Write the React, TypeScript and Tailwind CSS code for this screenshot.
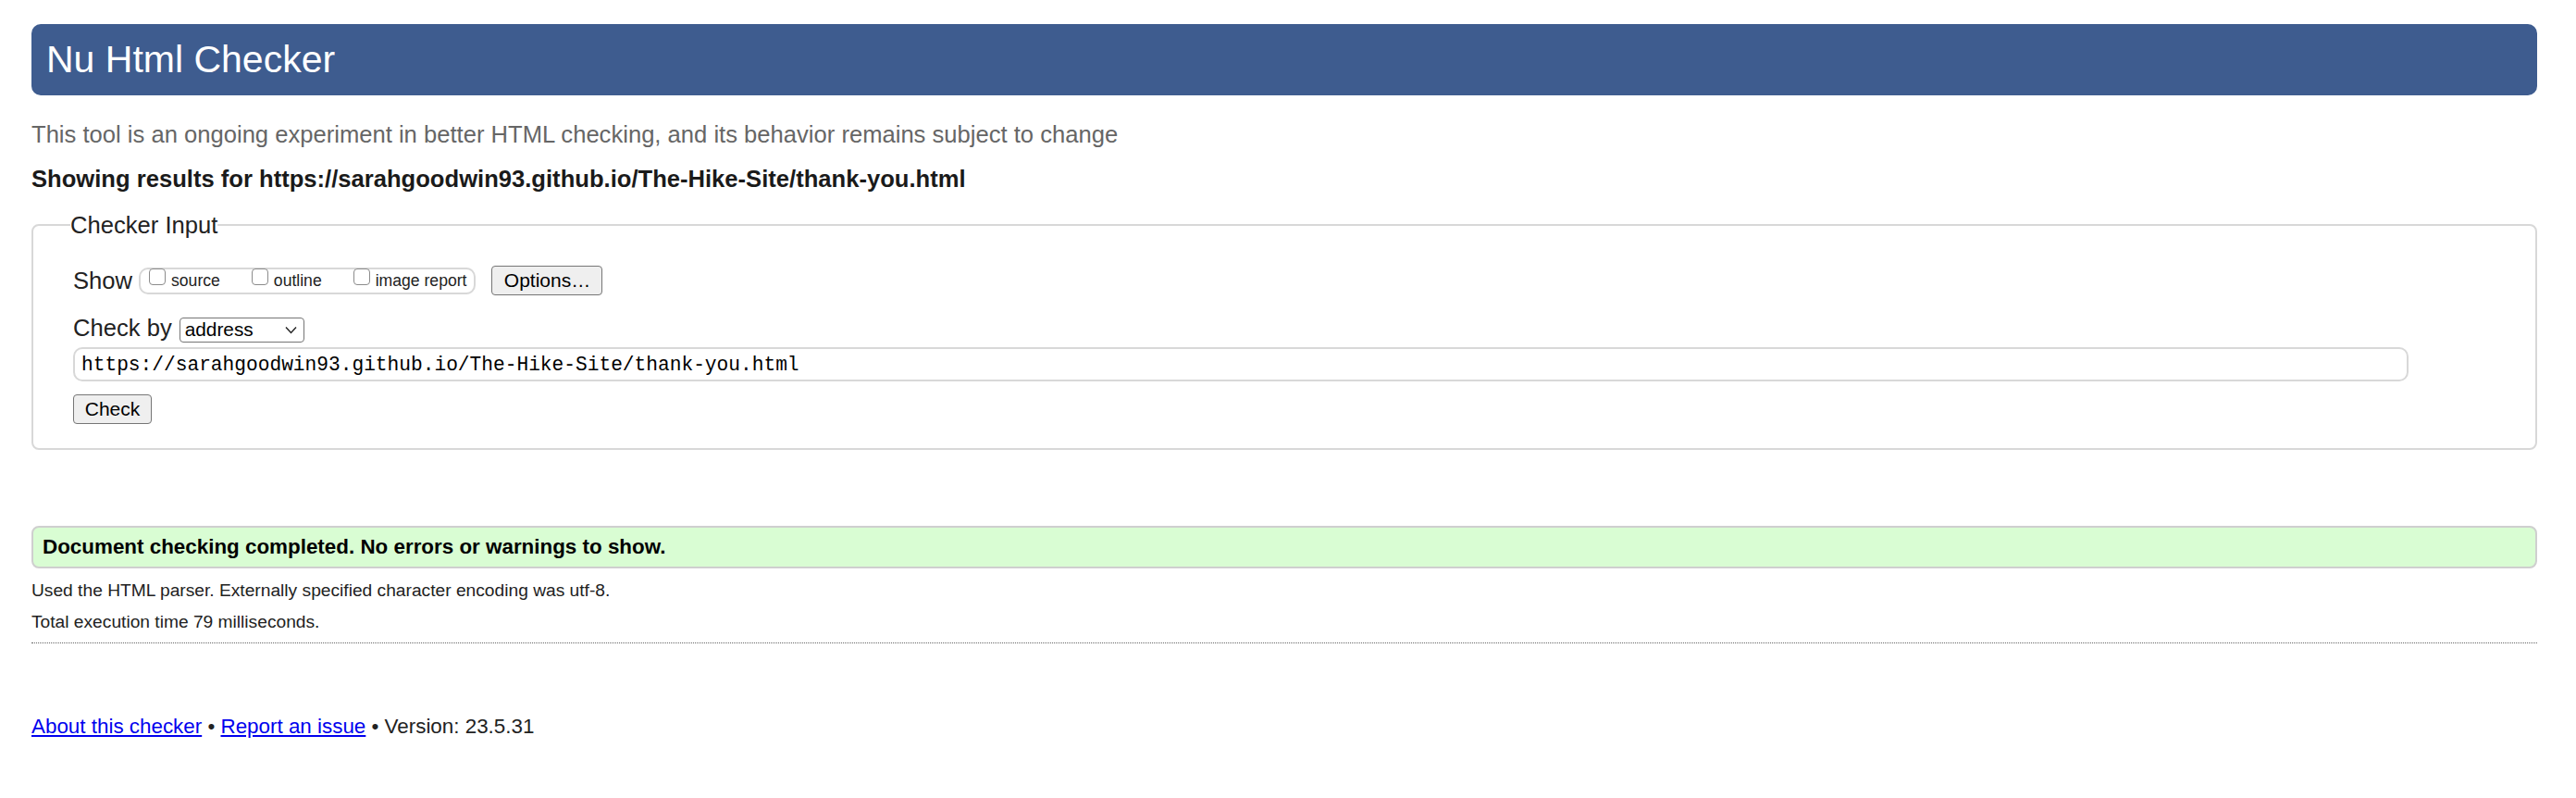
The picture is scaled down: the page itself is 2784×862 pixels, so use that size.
import React from "react";

const URL = "https://sarahgoodwin93.github.io/The-Hike-Site/thank-you.html";

const OPTIONS = ["source", "outline", "image report"];

const Checkbox: React.FC<{ label: string; first?: boolean }> = ({ label, first }) => (
  <label className={first ? "flex items-center" : "ml-[34px] flex items-center"}>
    <input
      type="checkbox"
      className="mb-[9px] h-[18px] w-[18px] appearance-none rounded-[4px] border border-[#8c8c8c] bg-white"
    />
    <span className="ml-[6px] text-[17.6px] leading-[22px]">{label}</span>
  </label>
);

export default function App() {
  return (
    <div className="min-h-[862px] bg-white font-['Liberation_Sans',Arial,sans-serif] text-[#222]">
      <div className="ml-[34px] mr-[42px] pt-[26px]">
        {/* Title bar */}
        <header className="h-[77px] rounded-[10px] bg-[#3e5c8f] pl-[16px]">
          <h1 className="text-[41px] leading-[77px] text-white">Nu Html Checker</h1>
        </header>

        <p className="mt-[26px] text-[25.6px] leading-[32px] text-[#666]">
          This tool is an ongoing experiment in better HTML checking, and its behavior remains subject to change
        </p>
        <p className="mt-[16px] text-[25.6px] font-bold leading-[32px] text-[#1a1a1a]">
          Showing results for {URL}
        </p>

        {/* Checker input */}
        <fieldset className="mt-[18px] rounded-[8px] border-2 border-[#d8d8d8] pb-[26px] pl-[43px] pr-[44px] pt-[28px]">
          <legend className="-ml-[3px] text-[25.6px] leading-[32px]">Checker Input</legend>

          <div className="flex h-[32px] items-center">
            <span className="text-[25.6px] leading-[32px]">Show</span>
            <div className="ml-[7px] flex h-[29px] items-center rounded-[10px] border-2 border-[#d8d8d8] pl-[9px] pr-[8px]">
              {OPTIONS.map((o, i) => (
                <Checkbox key={o} label={o} first={i === 0} />
              ))}
            </div>
            <button className="ml-[17px] h-[32px] w-[120px] rounded-[4px] border border-[#767676] bg-[#efefef] text-[21px] leading-[24px] text-black">
              Options…
            </button>
          </div>

          <div className="mt-[19px] flex items-baseline">
            <span className="text-[25.6px] leading-[32px]">Check by</span>
            <span className="ml-[8px] inline-flex h-[27px] w-[135px] items-center justify-between rounded-[4px] border border-[#767676] bg-white pl-[5px] pr-[7px] text-[20.8px] leading-[24px] text-black">
              address
              <svg width="13" height="9" viewBox="0 0 13 9" fill="none">
                <path d="M1 1.5 L6.5 7.5 L12 1.5" stroke="#222" strokeWidth="1.4" />
              </svg>
            </span>
          </div>

          <input
            readOnly
            value={URL}
            className="mt-[5px] block h-[37px] w-[2524px] rounded-[10px] border-2 border-[#d8d8d8] px-[7px] font-['Liberation_Mono',monospace] text-[21.2px] text-black outline-none"
          />

          <button className="mt-[14px] block h-[32px] w-[85px] rounded-[4px] border border-[#767676] bg-[#efefef] text-[21px] leading-[24px] text-black">
            Check
          </button>
        </fieldset>

        {/* Result */}
        <div className="mt-[82px] flex h-[46px] items-center rounded-[8px] border-2 border-[#cfcfcf] bg-[#d9fdd3] pl-[10px] text-[22.4px] font-bold text-black">
          Document checking completed. No errors or warnings to show.
        </div>
        <p className="mt-[12px] text-[19.2px] leading-[24px]">
          Used the HTML parser. Externally specified character encoding was utf-8.
        </p>
        <p className="mt-[10px] text-[19.2px] leading-[24px]">Total execution time 79 milliseconds.</p>
        <hr className="mt-[10px] border-t border-dotted border-[#666]" />

        <p className="mt-[76px] text-[22.4px] leading-[28px]">
          <a href="#" className="text-[#0000ee] underline">About this checker</a>
          {" • "}
          <a href="#" className="text-[#0000ee] underline">Report an issue</a>
          {" • Version: 23.5.31"}
        </p>
      </div>
    </div>
  );
}
